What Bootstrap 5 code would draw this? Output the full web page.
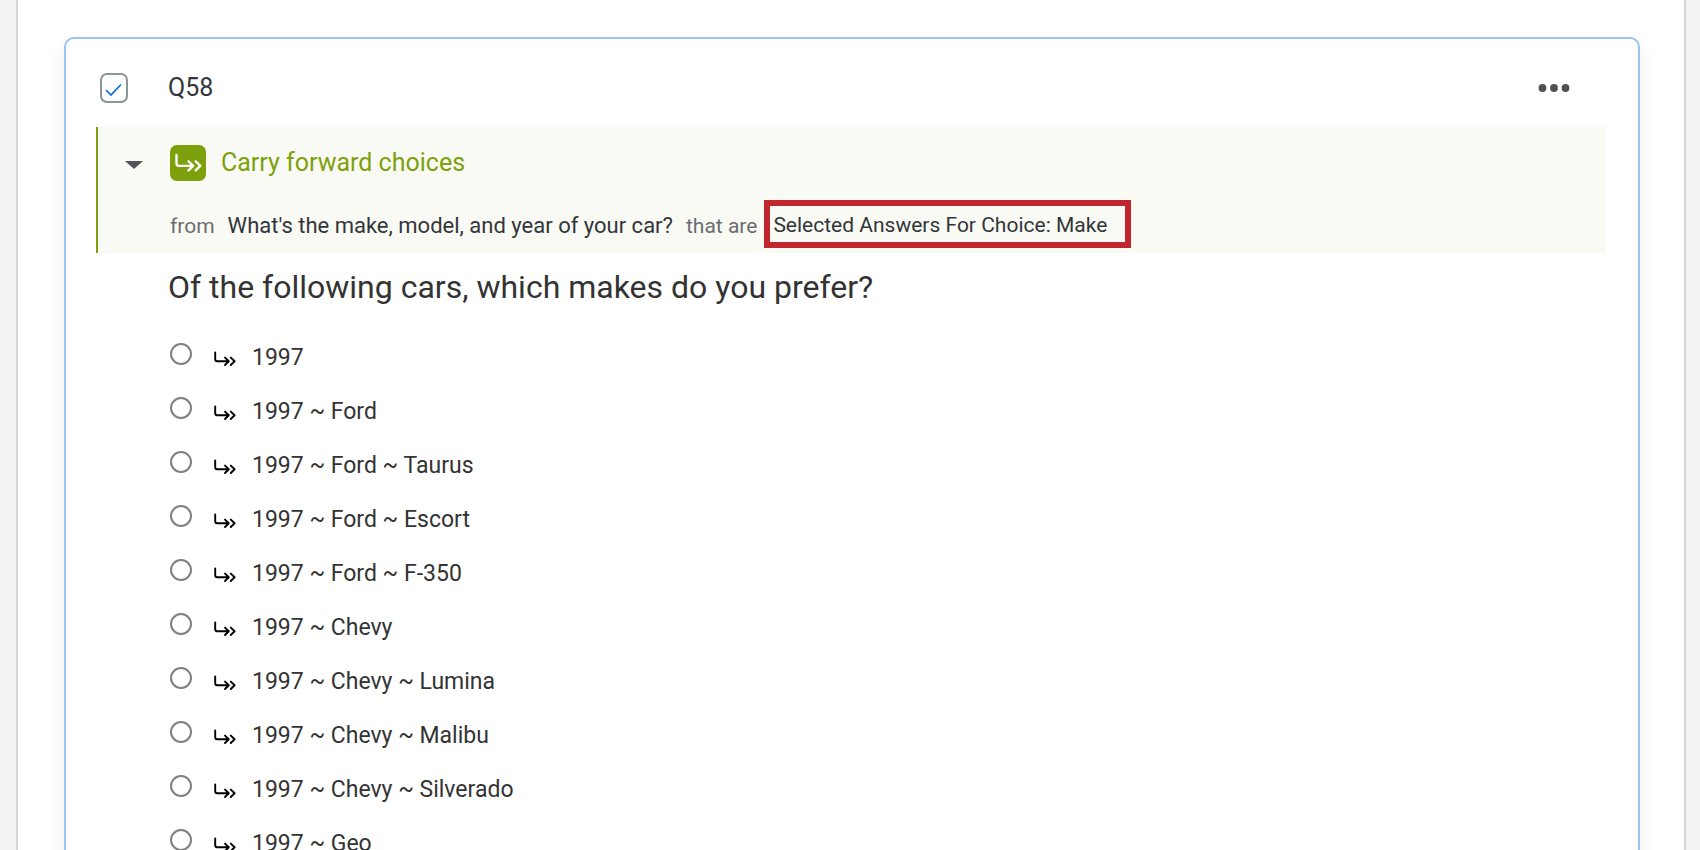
<!DOCTYPE html>
<html lang="en">
<head>
<meta charset="utf-8">
<meta name="viewport" content="width=device-width, initial-scale=1">
<title>Survey editor – Q58</title>
<link href="https://cdn.jsdelivr.net/npm/bootstrap@5.3.0/dist/css/bootstrap.min.css" rel="stylesheet">
<style>
body { font-family: Roboto, sans-serif; background: #f3f3f3; color: #32363a; }
.survey-sheet { margin: 0 14px 0 16px; padding: 37px 44px 0 46px; border: solid #d5d5d5; border-width: 0 2px; background: #fff; }
.question-card { border: 2px solid #9bc4f1; border-radius: 10px; padding: 22px 32px 48px 30px; box-shadow: 0 6px 16px rgba(0, 0, 0, .08); }
.question-head { height: 54px; margin-bottom: 12px; }
.select-box { appearance: none; width: 28px; height: 30px; margin: 0 40px 0 4px; border: 2px solid #8b939b; border-radius: 7px; background: #fff; }
.select-box:checked { background: #fff url("data:image/svg+xml,%3Csvg xmlns='http://www.w3.org/2000/svg' width='24' height='26'%3E%3Cpath d='M4 15L9 20L19 9.500' fill='none' stroke='%230b6ed0' stroke-width='1.700'/%3E%3C/svg%3E") center no-repeat; }
.question-id { font-size: 25px; line-height: 30px; }
.more-btn { margin-right: 36px; line-height: 0; }
.bare { border: 0; background: none; padding: 0; color: inherit; }
.carry-block { border-left: 2px solid #7ca10c; background: #f9faf4; padding: 18px 0 5px 27px; }
.caret-btn { width: 45px; text-align: left; line-height: 0; }
.carry-mark { width: 36px; height: 36px; border-radius: 7px; background: #7ca10c; color: #fff; margin-right: 15px; }
.carry-title { font-size: 25px; line-height: 36px; color: #7ca10c; }
.carry-source { font-size: 22px; line-height: 36px; margin: 19px 0 0 45px; }
.joiner { font-size: 21px; padding-top: 4px; color: #6a6d70; }
.source-link { margin: 0 13px; }
.call-out { height: 48px; border: 6px solid #c12530; padding: 2px 18px 0 3px; margin-left: 7px; font-size: 21px; line-height: 34px; }
.question-text { font-size: 32px; line-height: 40px; margin: 14px 0 0 72px; font-weight: 400; color: #333; }
.choices { margin: 24px 0 0 74px; color: #333; }
.choice { height: 54px; }
.choice input { appearance: none; width: 22px; height: 22px; margin: 0 22px 8px 0; border: 2px solid #808080; border-radius: 50%; background: #fff; }
.choice svg { margin: 2px 16px 0 0; color: #000; }
.choice label { font-size: 23px; line-height: 30px; }
</style>
</head>
<body>
<svg class="d-none" xmlns="http://www.w3.org/2000/svg">
  <symbol id="carry" viewBox="0 0 22 16">
    <path d="M1.200 1.500V8.300Q1.200 10.300 3.200 10.300H14.500M11 6.600L14.800 10.300L11 14M16.800 6.600L20.600 10.300L16.800 14" fill="none" stroke="currentColor" stroke-width="1.900" stroke-linecap="round" stroke-linejoin="round"/>
  </symbol>
</svg>
<main class="vh-100 overflow-hidden">
  <div class="survey-sheet">
    <section class="question-card">
      <header class="question-head d-flex align-items-center">
        <input class="select-box" type="checkbox" id="pick" checked>
        <label class="question-id" for="pick">Q58</label>
        <button class="more-btn bare ms-auto" type="button" aria-label="More options">
          <svg width="32" height="10" fill="#4d5156"><circle cx="4.500" cy="5" r="3.900"/><circle cx="16" cy="5" r="3.900"/><circle cx="27.500" cy="5" r="3.900"/></svg>
        </button>
      </header>
      <div class="carry-block">
        <div class="d-flex align-items-center">
          <button class="caret-btn bare pt-1" type="button" aria-label="Collapse">
            <svg width="18" height="8" fill="#51555a"><path d="M0 0H18L9 8Z"/></svg>
          </button>
          <span class="carry-mark d-flex align-items-center justify-content-center"><svg width="27" height="20"><use href="#carry"/></svg></span>
          <span class="carry-title">Carry forward choices</span>
        </div>
        <div class="carry-source d-flex align-items-center">
          <span class="joiner">from</span>
          <button class="source-link bare pt-1" type="button">What's the make, model, and year of your car?</button>
          <span class="joiner">that are</span>
          <button class="call-out bg-transparent text-reset" type="button">Selected Answers For Choice: Make</button>
        </div>
      </div>
      <h1 class="question-text">Of the following cars, which makes do you prefer?</h1>
      <div class="choices">
        <div class="choice d-flex align-items-center"><input type="radio" name="c" id="c1"><svg width="22" height="16"><use href="#carry"/></svg><label for="c1">1997</label></div>
        <div class="choice d-flex align-items-center"><input type="radio" name="c" id="c2"><svg width="22" height="16"><use href="#carry"/></svg><label for="c2">1997 ~ Ford</label></div>
        <div class="choice d-flex align-items-center"><input type="radio" name="c" id="c3"><svg width="22" height="16"><use href="#carry"/></svg><label for="c3">1997 ~ Ford ~ Taurus</label></div>
        <div class="choice d-flex align-items-center"><input type="radio" name="c" id="c4"><svg width="22" height="16"><use href="#carry"/></svg><label for="c4">1997 ~ Ford ~ Escort</label></div>
        <div class="choice d-flex align-items-center"><input type="radio" name="c" id="c5"><svg width="22" height="16"><use href="#carry"/></svg><label for="c5">1997 ~ Ford ~ F-350</label></div>
        <div class="choice d-flex align-items-center"><input type="radio" name="c" id="c6"><svg width="22" height="16"><use href="#carry"/></svg><label for="c6">1997 ~ Chevy</label></div>
        <div class="choice d-flex align-items-center"><input type="radio" name="c" id="c7"><svg width="22" height="16"><use href="#carry"/></svg><label for="c7">1997 ~ Chevy ~ Lumina</label></div>
        <div class="choice d-flex align-items-center"><input type="radio" name="c" id="c8"><svg width="22" height="16"><use href="#carry"/></svg><label for="c8">1997 ~ Chevy ~ Malibu</label></div>
        <div class="choice d-flex align-items-center"><input type="radio" name="c" id="c9"><svg width="22" height="16"><use href="#carry"/></svg><label for="c9">1997 ~ Chevy ~ Silverado</label></div>
        <div class="choice d-flex align-items-center"><input type="radio" name="c" id="c10"><svg width="22" height="16"><use href="#carry"/></svg><label for="c10">1997 ~ Geo</label></div>
      </div>
    </section>
  </div>
</main>
<script src="https://cdn.jsdelivr.net/npm/bootstrap@5.3.0/dist/js/bootstrap.bundle.min.js"></script>
</body>
</html>
